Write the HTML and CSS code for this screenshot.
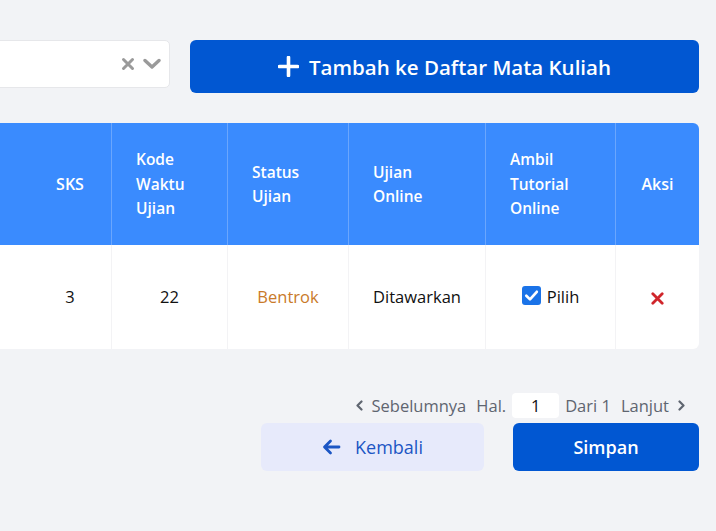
FILE: index.html
```html
<!DOCTYPE html>
<html lang="id">
<head>
<meta charset="utf-8">
<title>Daftar Mata Kuliah</title>
<link rel="stylesheet" href="styles.css">
</head>
<body>
<div class="page">
  <div class="toolbar">
    <div class="select">
      <span class="select-value"></span>
      <span class="select-clear">
        <svg width="14" height="14" viewBox="0 0 14 14"><path d="M2.5 2.5 L11.5 11.5 M11.5 2.5 L2.5 11.5" stroke="#9a9a9a" stroke-width="3" stroke-linecap="round"/></svg>
      </span>
      <span class="select-arrow">
        <svg width="18" height="12" viewBox="0 0 18 12"><path d="M2 2.5 L9 9 L16 2.5" fill="none" stroke="#9a9a9a" stroke-width="3.4" stroke-linecap="round" stroke-linejoin="round"/></svg>
      </span>
    </div>
    <button class="btn-add">
      <svg width="21" height="21" viewBox="0 0 21 21"><path d="M10.5 1.5 V19.5 M1.5 10.5 H19.5" stroke="#fff" stroke-width="3.6" stroke-linecap="round"/></svg>
      <span>Tambah ke Daftar Mata Kuliah</span>
    </button>
  </div>

  <table class="grid">
    <colgroup>
      <col class="c-name">
      <col class="c-sks">
      <col class="c-kode">
      <col class="c-status">
      <col class="c-online">
      <col class="c-tutor">
      <col class="c-aksi">
    </colgroup>
    <thead>
      <tr>
        <th class="th-name"></th>
        <th class="th-center">SKS</th>
        <th>Kode<br>Waktu<br>Ujian</th>
        <th>Status<br>Ujian</th>
        <th>Ujian<br>Online</th>
        <th>Ambil<br>Tutorial<br>Online</th>
        <th class="th-center th-last">Aksi</th>
      </tr>
    </thead>
    <tbody>
      <tr>
        <td class="td-name"></td>
        <td>3</td>
        <td>22</td>
        <td class="bentrok">Bentrok</td>
        <td>Ditawarkan</td>
        <td>
          <label class="pilih">
            <span class="check">
              <svg width="19" height="19" viewBox="0 0 19 19"><rect x="0" y="0" width="19" height="19" rx="3" fill="#1a73e8"/><path d="M4.3 9.8 L8 13.4 L14.8 5.8" fill="none" stroke="#fff" stroke-width="2.7" stroke-linecap="round" stroke-linejoin="round"/></svg>
            </span>
            <span class="pilih-text">Pilih</span>
          </label>
        </td>
        <td class="td-last">
          <svg width="13" height="13" viewBox="0 0 13 13"><path d="M1.8 1.8 L11.2 11.2 M11.2 1.8 L1.8 11.2" stroke="#d0262b" stroke-width="2.8" stroke-linecap="round"/></svg>
        </td>
      </tr>
    </tbody>
  </table>

  <div class="pager">
    <span class="pager-link">
      <svg width="9" height="11" viewBox="0 0 9 11"><path d="M6.5 1.5 L2.5 5.5 L6.5 9.5" fill="none" stroke="#5f6570" stroke-width="2.2" stroke-linecap="round" stroke-linejoin="round"/></svg>
      <span>Sebelumnya</span>
    </span>
    <span class="pager-label">Hal.</span>
    <span class="pager-input">1</span>
    <span class="pager-label">Dari 1</span>
    <span class="pager-link">
      <span>Lanjut</span>
      <svg width="9" height="11" viewBox="0 0 9 11"><path d="M2.5 1.5 L6.5 5.5 L2.5 9.5" fill="none" stroke="#5f6570" stroke-width="2.2" stroke-linecap="round" stroke-linejoin="round"/></svg>
    </span>
  </div>

  <div class="actions">
    <button class="btn-back">
      <svg width="19" height="16" viewBox="0 0 19 16"><path d="M17 8 H3 M8.5 2 L2.5 8 L8.5 14" fill="none" stroke="#1c56c4" stroke-width="2.8" stroke-linecap="round" stroke-linejoin="round"/></svg>
      <span>Kembali</span>
    </button>
    <button class="btn-save">Simpan</button>
  </div>
</div>
</body>
</html>
```

FILE: styles.css
```css
html, body {
  margin: 0;
  padding: 0;
  background: #f2f3f6;
}

body {
  font-family: "Open Sans", "Liberation Sans", sans-serif;
  color: #111;
  overflow: hidden;
  width: 716px;
  height: 531px;
}

.page {
  display: flex;
  flex-direction: column;
  align-items: flex-end;
  padding: 40px 17px 0 0;
}

.toolbar {
  display: flex;
  align-items: flex-start;
  gap: 20px;
}

.select {
  width: 420px;
  height: 48px;
  box-sizing: border-box;
  background: #fff;
  border: 1px solid #e6e7ea;
  border-radius: 5px;
  display: flex;
  align-items: center;
  justify-content: flex-end;
  padding-right: 8px;
  gap: 8px;
}

.select-value {
  flex: 1;
}

.select-clear,
.select-arrow {
  display: flex;
  align-items: center;
}

.btn-add {
  width: 509px;
  height: 53px;
  border: none;
  border-radius: 6px;
  background: #0157d2;
  color: #fff;
  font-family: inherit;
  font-size: 20.5px;
  font-weight: 600;
  display: flex;
  align-items: center;
  justify-content: center;
  gap: 10px;
  padding: 0;
}

.grid {
  margin-top: 30px;
  border-collapse: separate;
  border-spacing: 0;
  table-layout: fixed;
  width: 970px;
  font-size: 16.5px;
}

.c-name { width: 300px; }
.c-sks { width: 82px; }
.c-kode { width: 116px; }
.c-status { width: 121px; }
.c-online { width: 137px; }
.c-tutor { width: 130px; }
.c-aksi { width: 84px; }

.grid th {
  background: #3a8bfe;
  color: #fff;
  font-size: 15.5px;
  font-weight: 600;
  text-align: left;
  line-height: 24.5px;
  height: 122px;
  box-sizing: border-box;
  padding: 0 0 0 24px;
  border-left: 1px solid #6aa6fd;
  vertical-align: middle;
}

.grid th.th-name,
.grid th:nth-child(2) {
  border-left: none;
}

.grid th.th-center {
  text-align: center;
  padding: 0;
  font-size: 16px;
}

.grid th.th-last {
  border-top-right-radius: 6px;
}

.grid td {
  background: #fff;
  height: 104px;
  box-sizing: border-box;
  text-align: center;
  vertical-align: middle;
  border-left: 1px solid #f3f3f5;
  padding: 0 0 2px;
}

.grid td.td-name,
.grid td:nth-child(2) {
  border-left: none;
}

.grid td.td-last {
  border-bottom-right-radius: 6px;
}

.grid td svg {
  display: inline-block;
  vertical-align: middle;
}

.bentrok {
  color: #c97a2a;
  font-weight: 500;
}

.pilih {
  display: inline-flex;
  align-items: center;
  gap: 6px;
}

.pilih-text {
  padding-top: 2px;
}

.check {
  display: flex;
}

.pager {
  margin-top: 44px;
  display: flex;
  align-items: center;
  gap: 10px;
  font-size: 16.5px;
  color: #5f6570;
  padding-right: 13px;
}

.pager-link {
  display: flex;
  align-items: center;
  gap: 8px;
}

.pager-input {
  width: 47px;
  height: 25px;
  background: #fff;
  border-radius: 4px;
  display: flex;
  align-items: center;
  justify-content: center;
  color: #111;
  margin: 0 -4px;
}

.actions {
  margin-top: 5px;
  display: flex;
  gap: 29px;
}

.btn-back,
.btn-save {
  height: 48px;
  border: none;
  border-radius: 6px;
  font-family: inherit;
  font-size: 18px;
  display: flex;
  align-items: center;
  justify-content: center;
}

.btn-back {
  width: 223px;
  background: #e7eafb;
  color: #1c56c4;
  gap: 14px;
  font-weight: 500;
}

.btn-save {
  width: 186px;
  background: #0157d2;
  color: #fff;
  font-weight: 600;
}
```
